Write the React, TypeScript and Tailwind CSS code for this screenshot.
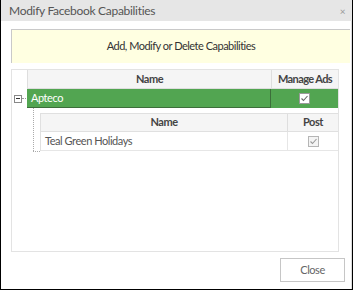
import React from "react";

function Check({ gray }: { gray?: boolean }) {
  return (
    <div className={`w-[11px] h-[11px] border ${gray ? "border-[#b5b5b5] bg-[#f4f4f4]" : "border-[#9a9a9a] bg-white"} flex items-center justify-center`}>
      <svg width="9" height="9" viewBox="0 0 9 9">
        <path d="M1.5 4.5 L3.5 6.5 L7.5 2" stroke={gray ? "#9a9a9a" : "#666"} strokeWidth="1.1" fill="none" />
      </svg>
    </div>
  );
}

export default function App() {
  return (
    <div className="w-[353px] h-[290px] bg-white border-l border-r border-b border-black flex flex-col tracking-[-0.45px]" style={{ fontFamily: 'Lato, "Noto Sans", sans-serif' }}>
      <div className="h-[21px] bg-[#e6e6e6] flex items-center justify-between pl-[8px] pr-[7px]">
        <span className="text-[12px] tracking-[-0.3px] text-[#555] leading-none">Modify Facebook Capabilities</span>
        <span className="text-[10px] text-[#999] leading-none">×</span>
      </div>
      <div className="flex-1 flex flex-col pl-[10px] pr-[1px] border-r border-[#dcdcdc]">
        <div className="mt-[8px] h-[34px] bg-[#ffffe1] border-t border-l border-[#c9c9c9] flex items-center justify-center text-[11px] tracking-[-0.5px] text-[#333]">
          Add, Modify or Delete Capabilities
        </div>
        <div className="mt-[6px] mr-[11px] h-[183px] border border-[#e3e3e3] flex flex-col text-[11px]">
          <div className="flex h-[19px]">
            <div className="w-[15px]" />
            <div className="flex-1 flex border-l border-b border-[#dedede] bg-[#f5f5f5] font-bold text-[#444]">
              <div className="flex-1 flex items-center justify-center">Name</div>
              <div className="w-[67px] flex items-center justify-center border-l border-[#dedede] tracking-[-0.6px]">Manage Ads</div>
            </div>
          </div>
          <div className="flex h-[19px] relative">
            <div className="w-[15px] flex items-center pl-[2px]">
              <div className="w-[8px] h-[8px] border border-[#888] bg-white flex items-center justify-center">
                <div className="w-[4px] h-px bg-[#333]" />
              </div>
              <div className="w-[4px] border-t border-dotted border-[#999]" />
            </div>
            <div className="flex-1 flex bg-[#52a551] text-white">
              <div className="flex-1 flex items-center pl-[4px] border-r border-b border-[#3c6e3a]">Apteco</div>
              <div className="w-[67px] flex items-center justify-center">
                <Check />
              </div>
            </div>
          </div>
          <div className="flex mt-[5px]">
            <div className="w-[28px] relative">
              <div className="absolute left-[21px] top-[-5px] h-[43px] border-l border-dotted border-[#aaa]" />
              <div className="absolute left-[21px] top-[38px] w-[7px] border-t border-dotted border-[#aaa]" />
            </div>
            <div className="flex-1 flex flex-col border-l border-t border-[#e0e0e0] text-[#444]">
              <div className="flex h-[18px] bg-[#f5f5f5] border-b border-[#e0e0e0] font-bold">
                <div className="flex-1 flex items-center justify-center">Name</div>
                <div className="w-[51px] flex items-center justify-center border-l border-[#dedede]">Post</div>
              </div>
              <div className="flex h-[19px] border-b border-[#e6e6e6]">
                <div className="flex-1 flex items-center pl-[4px] text-[#555]">Teal Green Holidays</div>
                <div className="w-[51px] flex items-center justify-center border-l border-[#e6e6e6]">
                  <Check gray />
                </div>
              </div>
            </div>
          </div>
        </div>
        <div className="flex justify-end mt-[6px] pr-[5px]">
          <div className="w-[65px] h-[24px] border border-[#c6c6c6] bg-white flex items-center justify-center text-[11px] text-[#666]">Close</div>
        </div>
      </div>
    </div>
  );
}
